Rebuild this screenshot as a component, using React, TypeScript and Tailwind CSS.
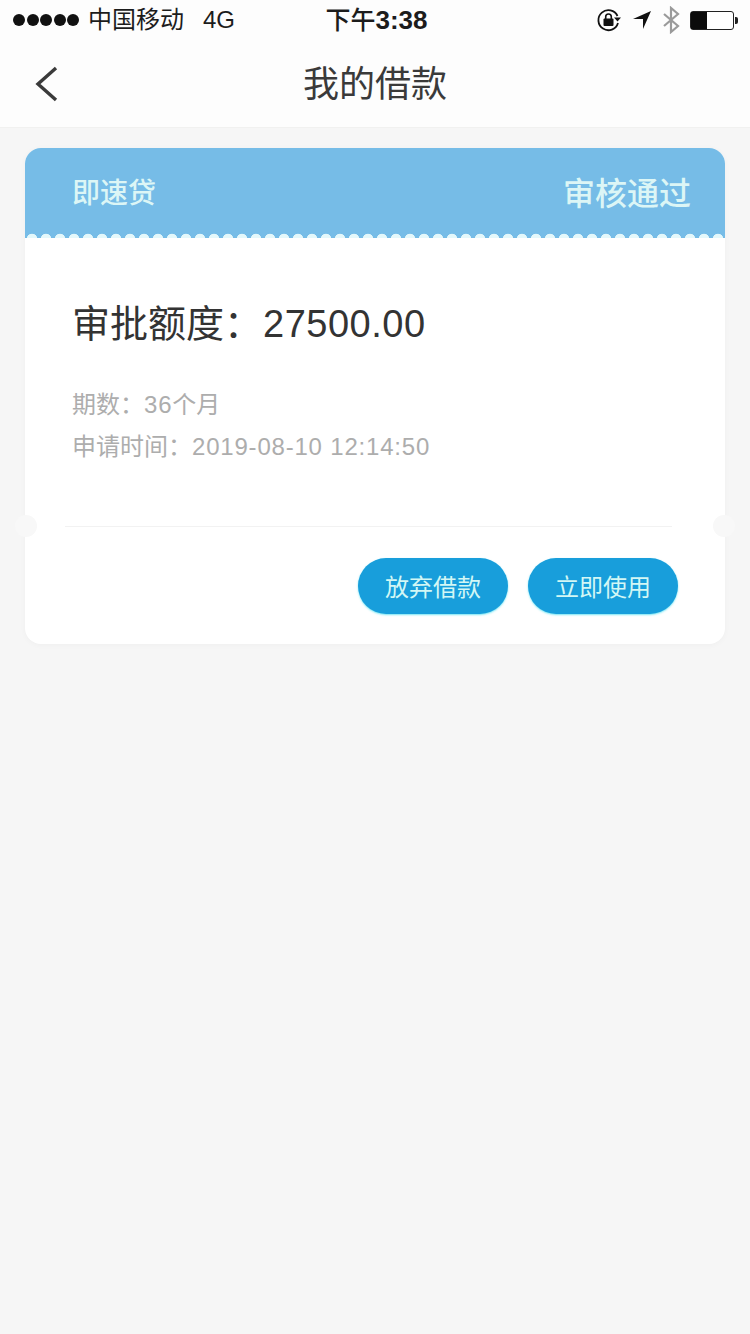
export default function App() {
  return (
    <div className="w-[750px] h-[1334px] bg-[#f6f6f6] font-['Liberation_Sans','Noto_Sans_CJK_SC',sans-serif] overflow-hidden">
      <header className="bg-[#fdfdfd] h-[128px] border-b border-[#f1f1f0]">
        <div className="h-[40px] grid grid-cols-3 items-center text-[#1c1c1c]">
          <div className="flex items-center pl-[13px]">
            <div className="flex gap-[1.5px]">
              {[0, 1, 2, 3, 4].map((i) => (
                <span key={i} className="w-[12px] h-[12px] rounded-full bg-[#111]" />
              ))}
            </div>
            <span className="ml-[9px] text-[24px] leading-none">中国移动</span>
            <span className="ml-[19px] text-[24px] leading-none">4G</span>
          </div>
          <div className="text-center text-[25px] leading-none font-medium pl-[3px]">
            下午<span className="font-bold text-[26px]">3:38</span>
          </div>
          <div className="flex items-center justify-end pr-[12px]">
            <svg width="26" height="26" viewBox="0 0 26 26" fill="none" className="mr-[10px]">
              <path d="M21.5 9A10 10 0 1 0 22 16" stroke="#111" strokeWidth="1.8" />
              <path d="M18 10.5h7l-3.5 4z" fill="#111" />
              <rect x="7.5" y="11.5" width="10" height="7.5" rx="1" fill="#111" />
              <path d="M9.7 12V9.8a2.8 2.8 0 0 1 5.6 0V12" stroke="#111" strokeWidth="1.6" />
            </svg>
            <svg width="20" height="20" viewBox="0 0 20 20" className="mr-[10px]">
              <path d="M19 1 11 19V9H1z" fill="#111" />
            </svg>
            <svg width="18" height="28" viewBox="0 0 18 28" fill="none" className="mr-[10px]">
              <path d="M2 8l14 12-7 6V2l7 6L2 20" stroke="#9a9a9a" strokeWidth="2.2" />
            </svg>
            <div className="flex items-center">
              <div className="w-[44px] h-[19px] border-[1.5px] border-[#222] rounded-[3px] bg-white">
                <div className="w-[16px] h-full bg-[#0c0c0c]" />
              </div>
              <div className="w-[3px] h-[7px] bg-[#222] rounded-r-[2px] ml-[1px]" />
            </div>
          </div>
        </div>
        <div className="relative h-[87px] flex items-center justify-center">
          <svg width="24" height="36" viewBox="0 0 24 36" fill="none" className="absolute left-[35px] top-[26px]">
            <path d="M21 2 3 18l18 16" stroke="#3a3a3a" strokeWidth="3.4" />
          </svg>
          <h1 className="text-[36px] leading-none font-normal text-[#3a3a3a] pt-[2px]">我的借款</h1>
        </div>
      </header>

      <main className="mx-[25px] mt-[20px] w-[700px] rounded-[16px] bg-white shadow-[0_1px_6px_rgba(0,0,0,0.03)]">
        <div className="rounded-t-[16px] bg-[#76bce7] h-[90px] flex flex-col">
          <div className="flex-1 flex items-center justify-between pl-[47px] pr-[34px] pt-[8px]">
            <span className="text-[28px] font-medium text-[#dcf6f6]">即速贷</span>
            <span className="text-[32px] font-medium text-[#dcf6f6]">审核通过</span>
          </div>
          <div className="h-[6px] bg-[radial-gradient(circle_at_7px_7px,#e4f8fb_5px,transparent_5.6px)] bg-[length:14px_6px]" />
        </div>

        <div className="relative h-[289px] pl-[47px]">
          <div className="pt-[65px] flex items-center text-[#333] leading-none h-[106px]">
            <span className="text-[38px]">审批额度：</span>
            <span className="text-[38px] ml-[1px] tracking-[0.5px]">27500.00</span>
          </div>
          <p className="mt-[40px] text-[24px] leading-[42px] text-[#adadad]">
            期数：<span className="tracking-[0.8px]">36</span>个月
          </p>
          <p className="text-[24px] leading-[42px] text-[#adadad]">
            申请时间：<span className="tracking-[0.8px]">2019-08-10 12:14:50</span>
          </p>
          <div className="absolute left-[40px] right-[53px] bottom-0 h-px bg-[#f2f2f2]" />
          <span className="absolute -left-[10px] -bottom-[10px] w-[22px] h-[22px] rounded-full bg-[#f8f8f8]" />
          <span className="absolute -right-[10px] -bottom-[10px] w-[22px] h-[22px] rounded-full bg-[#f8f8f8]" />
        </div>

        <div className="h-[117px] flex justify-end gap-[20px] pt-[31px] pr-[47px]">
          <button className="w-[150px] h-[56px] rounded-full bg-[#189edb] text-[24px] pt-[3px] text-[#d2f7f5] shadow-[0_1px_2px_rgba(60,220,240,0.7)]">放弃借款</button>
          <button className="w-[150px] h-[56px] rounded-full bg-[#189edb] text-[24px] pt-[3px] text-[#d2f7f5] shadow-[0_1px_2px_rgba(60,220,240,0.7)]">立即使用</button>
        </div>
      </main>
    </div>
  );
}
